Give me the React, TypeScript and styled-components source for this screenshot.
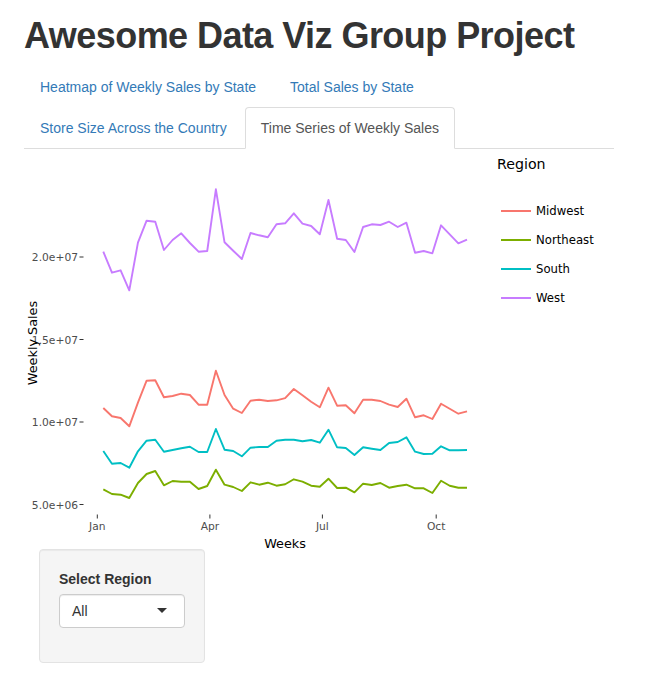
import React from "react";
import styled, { createGlobalStyle } from "styled-components";

const GlobalStyle = createGlobalStyle`
  html, body { margin: 0; padding: 0; background: #fff; }
  body {
    font-family: "Liberation Sans", Helvetica, Arial, sans-serif;
    font-size: 14px;
    line-height: 1.42857143;
    color: #333;
  }
  * { box-sizing: border-box; }
`;

const Page = styled.div`
  width: 590px;
  margin-left: 24px;
`;

const Title = styled.h1`
  margin: 16px 0 10px;
  font-size: 36px;
  line-height: 1.1;
  font-weight: 700;
  letter-spacing: -0.55px;
  color: #333;
`;

const TabList = styled.ul`
  display: flex;
  flex-wrap: wrap;
  list-style: none;
  margin: 0;
  padding: 0;
  border-bottom: 1px solid #ddd;
`;

const TabItem = styled.li`
  margin-bottom: -1px;
`;

const TabLink = styled.a<{ $active?: boolean }>`
  display: block;
  margin-right: 2px;
  padding: 10px 15px;
  line-height: 20px;
  border: 1px solid ${(p) => (p.$active ? "#ddd" : "transparent")};
  border-bottom-color: ${(p) => (p.$active ? "#fff" : "transparent")};
  border-radius: 4px 4px 0 0;
  background: ${(p) => (p.$active ? "#fff" : "transparent")};
  color: ${(p) => (p.$active ? "#555" : "#337ab7")};
  text-decoration: none;
  cursor: pointer;
`;

const Plot = styled.svg`
  display: block;
  width: 590px;
  height: 401px;
  margin-bottom: -1px;
  overflow: visible;
`;

const TickText = styled.text`
  font-family: "DejaVu Sans", Verdana, sans-serif;
  font-size: 10.7px;
  fill: #4d4d4d;
`;

const AxisTitle = styled.text`
  font-family: "DejaVu Sans", Verdana, sans-serif;
  font-size: 12.8px;
  fill: #000;
`;

const LegendTitle = styled.text`
  font-family: "DejaVu Sans", Verdana, sans-serif;
  font-size: 14.2px;
  fill: #000;
`;

const LegendText = styled.text`
  font-family: "DejaVu Sans", Verdana, sans-serif;
  font-size: 11.69px;
  fill: #000;
`;

const Sidebar = styled.div`
  margin-left: 39px;
`;

const Well = styled.div`
  width: 166px;
  padding: 19px;
  margin-bottom: 20px;
  background: #f5f5f5;
  border: 1px solid #e3e3e3;
  border-radius: 4px;
  box-shadow: inset 0 1px 1px rgba(0, 0, 0, 0.05);
`;

const FormGroup = styled.div`
  margin-bottom: 15px;
`;

const Label = styled.label`
  display: block;
  margin-bottom: 5px;
  font-weight: 700;
`;

const SelectBox = styled.div`
  display: flex;
  align-items: center;
  justify-content: space-between;
  height: 34px;
  padding: 6px 17px 6px 12px;
  background: #fff;
  border: 1px solid #ccc;
  border-radius: 4px;
  box-shadow: inset 0 1px 1px rgba(0, 0, 0, 0.075);
  color: #333;
  line-height: 20px;
`;

const Caret = styled.span`
  width: 0;
  height: 0;
  border-style: solid;
  border-width: 5px 5px 0 5px;
  border-color: #333 transparent transparent transparent;
`;

const X0 = 103.3;
const DX = 8.66;

const series = [
  {
    name: "Midwest",
    color: "#F8766D",
    ys: [407, 415.3, 417, 425.3, 401.7, 379.7, 379.3, 396.3, 395, 392.7, 394, 403.7, 403.7, 369.7, 394, 407.7, 412, 399.7, 398.7, 400, 399.3, 397.2,
      388, 394.3, 400.7, 406.3, 386.7, 404.7, 404.3, 412.3, 398.7, 398.7, 400, 403.7, 406, 397.7, 416.3, 414.3, 418, 402.7, 407.7, 412.7, 410.3],
  },
  {
    name: "Northeast",
    color: "#7CAE00",
    ys: [488.3, 493, 493.7, 497, 482, 473, 470, 484.3, 480, 480.7, 480.7, 488, 485, 468.7, 483.7, 486, 490, 481.3, 483.7, 481.7, 484.7, 483.3,
      478.3, 480.7, 484.7, 485.7, 477.7, 487, 486.7, 491.3, 482.7, 484, 482, 486.7, 485, 483.7, 487.3, 487.3, 492, 479.7, 484.7, 486.7, 486.7],
  },
  {
    name: "South",
    color: "#00BFC4",
    ys: [450, 462.7, 462, 466.7, 450.3, 439.7, 438.7, 450.7, 449, 447.3, 445.7, 451, 451, 428, 448.7, 450, 455.3, 446.7, 446, 446, 439.7, 438.7,
      438.7, 440.3, 439, 441.7, 428.7, 446.3, 447, 454, 446.3, 447.7, 449, 442, 441, 436.3, 450.7, 453, 452.7, 445.3, 449.3, 449.3, 449],
  },
  {
    name: "West",
    color: "#C77CFF",
    ys: [250.7, 271.7, 269.3, 289.3, 241.7, 219.7, 220.7, 249, 239, 232.3, 242, 250.7, 250, 188.3, 241.3, 249.7, 258, 232, 234.3, 236.3, 223.3, 222.3,
      212.3, 222.7, 225, 233.3, 199, 237.7, 239, 251, 226, 223.3, 224, 220.7, 226, 221.7, 251.7, 250, 252.3, 224.3, 233.3, 242.3, 238.7],
  },
];

const yTicks = [
  { y: 256, label: "2.0e+07" },
  { y: 338.5, label: "1.5e+07" },
  { y: 421, label: "1.0e+07" },
  { y: 503.5, label: "5.0e+06" },
];

const xTicks = [
  { x: 97.3, label: "Jan" },
  { x: 209.9, label: "Apr" },
  { x: 322.4, label: "Jul" },
  { x: 436.2, label: "Oct" },
];

const tabsRow = [
  { label: "Heatmap of Weekly Sales by State" },
  { label: "Total Sales by State" },
  { label: "Store Size Across the Country" },
  { label: "Time Series of Weekly Sales", active: true },
];

function Chart() {
  return (
    <Plot viewBox="24 148 590 401">
      {series.map((s) => (
        <polyline
          key={s.name}
          points={s.ys.map((y, i) => `${(X0 + DX * i).toFixed(2)},${y}`).join(" ")}
          fill="none"
          stroke={s.color}
          strokeWidth={1.9}
          strokeLinejoin="round"
        />
      ))}
      {yTicks.map((t) => (
        <g key={t.label}>
          <line x1={79.5} x2={83.5} y1={t.y} y2={t.y} stroke="#333" strokeWidth={1} />
          <TickText x={78} y={t.y + 4} textAnchor="end">
            {t.label}
          </TickText>
        </g>
      ))}
      {xTicks.map((t) => (
        <g key={t.label}>
          <line x1={t.x} x2={t.x} y1={513.5} y2={517.5} stroke="#333" strokeWidth={1} />
          <TickText x={t.x} y={529} textAnchor="middle">
            {t.label}
          </TickText>
        </g>
      ))}
      <AxisTitle x={285} y={547} textAnchor="middle">
        Weeks
      </AxisTitle>
      <AxisTitle x={37} y={342} textAnchor="middle" transform="rotate(-90 37 342)">
        Weekly Sales
      </AxisTitle>
      <LegendTitle x={497} y={168}>
        Region
      </LegendTitle>
      {series.map((s, i) => {
        const y = 210 + i * 29;
        return (
          <g key={s.name}>
            <line x1={501} x2={531} y1={y} y2={y} stroke={s.color} strokeWidth={2} />
            <LegendText x={536} y={y + 4.2}>
              {s.name}
            </LegendText>
          </g>
        );
      })}
    </Plot>
  );
}

export default function App() {
  return (
    <>
      <GlobalStyle />
      <Page>
        <Title>Awesome Data Viz Group Project</Title>
        <TabList>
          {tabsRow.map((t) => (
            <TabItem key={t.label}>
              <TabLink $active={t.active}>{t.label}</TabLink>
            </TabItem>
          ))}
        </TabList>
        <Chart />
      </Page>
      <Sidebar>
        <Well>
          <FormGroup>
            <Label>Select Region</Label>
            <SelectBox>
              <span>All</span>
              <Caret />
            </SelectBox>
          </FormGroup>
        </Well>
      </Sidebar>
    </>
  );
}
